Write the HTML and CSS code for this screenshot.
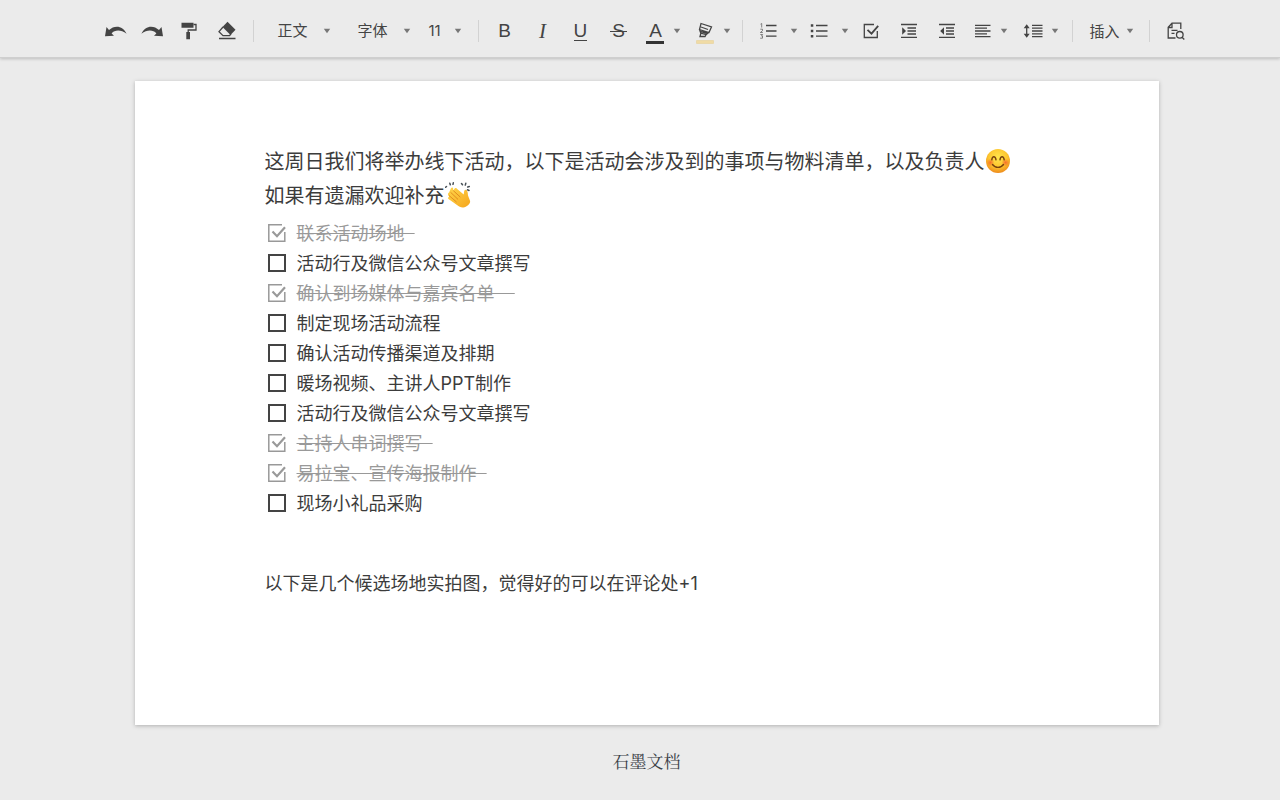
FILE: index.html
```html
<!DOCTYPE html>
<html lang="zh-CN">
<head>
<meta charset="utf-8">
<meta name="viewport" content="width=device-width, initial-scale=1">
<title>石墨文档</title>
<link rel="stylesheet" href="styles.css">
</head>
<body>
<svg class="defs" aria-hidden="true">
  <symbol id="caret" viewBox="0 0 8 6"><path d="M.8.8h6.4L4 5.2z" fill="#777"/></symbol>
  <symbol id="tick" viewBox="0 0 20 20"><path d="M15 1.8H1.8v16.4h16V9" fill="none" stroke="currentColor" stroke-width="1.5"/><path d="M5.5 8.5l4.5 4.7 8-9" fill="none" stroke="currentColor" stroke-width="2.2"/></symbol>
</svg>

<header class="toolbar" role="toolbar" aria-label="格式">
  <div class="group history">
    <button class="tool narrow" aria-label="撤销"><svg width="22" height="12" viewBox="0 0 22 12"><path class="solid" d="M1.5 2L0 11.2l9-.5-2.4-2.3C10 4.6 16 4.6 21.6 8.8 18 .4 9.500-.2 4 5z"/></svg></button>
    <button class="tool narrow" aria-label="重做"><svg width="22" height="12" viewBox="0 0 22 12"><path class="solid" transform="matrix(-1 0 0 1 22 0)" d="M1.5 2L0 11.2l9-.5-2.4-2.3C10 4.6 16 4.6 21.6 8.8 18 .4 9.500-.2 4 5z"/></svg></button>
    <button class="tool" aria-label="格式刷"><svg width="16" height="18" viewBox="0 0 16 18"><path class="solid" d="M.5.8h12v5H.5zM5.300 10H9v7.200H5.300z"/><path class="line" d="M12.500 2.500H15V8H7.200v2.500"/></svg></button>
    <button class="tool" aria-label="清除格式"><svg width="18" height="19" viewBox="0 0 18 19"><path class="solid" d="M9.500.8l8 8-5 5.200-8-8z"/><path class="line" d="M5 6L1 10.700l4 4h6.500L13 13M1 17.500h16.500"/></svg></button>
  </div>
  <div class="group selects">
    <label class="picker"><select aria-label="段落样式"><option>正文</option><option>标题</option></select><svg width="8" height="6"><use href="#caret"/></svg></label>
    <label class="picker"><select aria-label="字体"><option>字体</option></select><svg width="8" height="6"><use href="#caret"/></svg></label>
    <label class="picker size"><select aria-label="字号"><option>11</option><option>12</option></select><svg width="8" height="6"><use href="#caret"/></svg></label>
  </div>
  <div class="group marks">
    <button class="tool letter" aria-label="加粗">B</button>
    <button class="tool letter italic" aria-label="斜体">I</button>
    <button class="tool letter" aria-label="下划线"><span class="under">U</span></button>
    <button class="tool letter" aria-label="删除线"><span class="strike">S</span></button>
    <button class="tool letter drop" aria-label="文字颜色"><span class="ink">A</span><svg width="8" height="6"><use href="#caret"/></svg></button>
    <button class="tool drop" aria-label="背景颜色"><svg class="marker" width="18" height="22" viewBox="0 0 18 22"><path class="line" d="M5 1.500l10.500 3.500-2.500 5.500-9.500-3zM3.500 7.500l1.300 3.800 5.400 1.200 2.800-2.200M5 5l7 2.500M4 9.500l7 1.500M4.800 11.300L4 14.500h5l1.200-2"/><path d="M.5 18.500h17v3H.5z" fill="#f0dba5" stroke="#e5cc91" stroke-width=".5"/></svg><svg width="8" height="6"><use href="#caret"/></svg></button>
  </div>
  <div class="group blocks">
    <button class="tool drop wide" aria-label="有序列表"><svg width="18" height="16" viewBox="0 0 18 16"><path class="line" d="M7 2.500h10.500M7 8h10.500M7 13.200h10.500"/><path d="M1.500 1.200l1.200-.7v4M1.300 6.200h2.200v1.500L1.300 9.500h2.500M1.300 11.500h2.300L2.500 13h1v2.200H1.200" fill="none" stroke="#666" stroke-width=".8"/></svg><svg width="8" height="6"><use href="#caret"/></svg></button>
    <button class="tool drop wide" aria-label="无序列表"><svg width="18" height="16" viewBox="0 0 18 16"><path class="line" d="M6 2.500h11.500M6 8h11.500M6 13.200h11.500"/><path class="solid" d="M.8 1.300h2.500v2.500H.8zM.8 6.700h2.500v2.500H.8zM.8 12h2.500v2.500H.8z"/></svg><svg width="8" height="6"><use href="#caret"/></svg></button>
    <button class="tool" aria-label="任务列表"><svg width="16" height="16" viewBox="0 0 16 16"><path class="line" d="M11 1.500H1.300v13h13V8"/><path d="M4.500 6.800l4 3.800 6.700-7.800" fill="none" stroke="#444" stroke-width="1.800"/></svg></button>
    <button class="tool" aria-label="增加缩进"><svg width="18" height="16" viewBox="0 0 18 16"><path class="line" d="M1 1.500h16M1 14.300h16M7.500 5h8.500M7.500 8h8.500M7.500 11h8.500"/><path class="solid" d="M2.200 4.300v7.400L6 8z"/></svg></button>
    <button class="tool" aria-label="减少缩进"><svg width="18" height="16" viewBox="0 0 18 16"><path class="line" d="M1 1.500h16M1 14.300h16M8 5h8M8 8h8M8 11h8"/><path class="solid" d="M6 4.300v7.400L2.200 8z"/></svg></button>
    <button class="tool drop" aria-label="对齐"><svg width="18" height="16" viewBox="0 0 18 16"><path class="line" d="M1 2.300h15.500M1 5.200h12M1 8h15.500M1 10.800h12M1 13.600h15.500"/></svg><svg width="8" height="6"><use href="#caret"/></svg></button>
    <button class="tool drop" aria-label="行高"><svg width="20" height="16" viewBox="0 0 20 16"><path class="line" d="M9 2.300h10.500M9 5.200h10.500M9 8h10.500M9 10.800h10.500M9 13.600h10.500M3.700 3v10"/><path class="solid" d="M.7 5.200h6l-3-4zM.7 10.800h6l-3 4z"/></svg><svg width="8" height="6"><use href="#caret"/></svg></button>
  </div>
  <div class="group insert">
    <button class="tool menu">插入<svg width="8" height="6"><use href="#caret"/></svg></button>
  </div>
  <div class="group last">
    <button class="tool find" aria-label="查找"><svg width="18" height="18" viewBox="0 0 18 18"><path class="line" d="M8.500 16H1.200V5.300L5 1.200h8.800V7M5 1.500v4H1.500M4.500 8.300h6M4.500 11.300h3"/><circle class="line" cx="12.800" cy="12.800" r="3.300"/><path class="line" d="M15 15.200l2.300 2.300"/></svg></button>
  </div>
</header>

<div class="workspace">
<main class="page">
  <p class="intro">这周日我们将举办线下活动，以下是活动会涉及到的事项与物料清单，以及负责人<svg class="emoji" role="img" aria-label="微笑" viewBox="0 0 26 26"><defs><radialGradient id="face" cx=".5" cy=".35" r=".65"><stop offset="0" stop-color="#ffe64d"/><stop offset=".6" stop-color="#fdc62f"/><stop offset="1" stop-color="#ee8b1c"/></radialGradient><radialGradient id="blush"><stop offset="0" stop-color="#f4532b" stop-opacity=".75"/><stop offset="1" stop-color="#f4532b" stop-opacity="0"/></radialGradient></defs><circle cx="13" cy="13" r="12" fill="url(#face)"/><circle cx="5.500" cy="14.500" r="4" fill="url(#blush)"/><circle cx="20.500" cy="14.500" r="4" fill="url(#blush)"/><path d="M6.800 11.800c.5-4 3.600-4 4.200 0M15 11.800c.5-4 3.600-4 4.200 0M7.500 16.500c2.800 3.800 8.200 3.800 11 0" fill="none" stroke="#79420e" stroke-width="1.400" stroke-linecap="round"/></svg><br>如果有遗漏欢迎补充<svg class="emoji" role="img" aria-label="鼓掌" viewBox="0 0 26 26"><defs><linearGradient id="hand" x1="0" y1="0" x2="1" y2="1"><stop offset="0" stop-color="#ffd64b"/><stop offset="1" stop-color="#f5a51c"/></linearGradient></defs><path d="M4 10.500l2-4.300c.8-1.300 2.300-.7 2.200.8l-.2 1.800 1.700-2.300c.8-1 2-.4 2.500.5l6.500 5.500c.4-2 .1-4.500 1.800-4.800 2-.2 2.300 3 2.600 6l2 5.300c.4 3-3.600 6.200-6.800 6.500-2.300.2-4.300-.8-6.300-2.400L3.500 17c-1-1-.4-2.200.8-2l-1-1.600c-.7-1.200-.3-2.300.7-2.900z" fill="url(#hand)"/><path d="M5.800 10.500l7 6.700M4.300 13.800l7 6M8.500 8.800l6.500 6" fill="none" stroke="#dd861b" stroke-width=".9" stroke-linecap="round"/><path d="M1.500 4.500l-1 .8M4.800 1.200l.5 1.500M8.300.8L8 2.300M16.500 1.500l1 1.300M20.800 1.300l-.5 1.800M24.300 4.500l-1.600.5M22.500 7.800l1.500.7" fill="none" stroke="#495158" stroke-width="1.500" stroke-linecap="round"/></svg></p>

  <ul class="tasks">
    <li><label><input type="checkbox" checked><svg><use href="#tick"/></svg><span>联系活动场地&nbsp;&nbsp;</span></label></li>
    <li><label><input type="checkbox"><svg><use href="#tick"/></svg><span>活动行及微信公众号文章撰写</span></label></li>
    <li><label><input type="checkbox" checked><svg><use href="#tick"/></svg><span>确认到场媒体与嘉宾名单&nbsp;&nbsp;&nbsp;&nbsp;</span></label></li>
    <li><label><input type="checkbox"><svg><use href="#tick"/></svg><span>制定现场活动流程</span></label></li>
    <li><label><input type="checkbox"><svg><use href="#tick"/></svg><span>确认活动传播渠道及排期</span></label></li>
    <li><label><input type="checkbox"><svg><use href="#tick"/></svg><span>暖场视频、主讲人PPT制作</span></label></li>
    <li><label><input type="checkbox"><svg><use href="#tick"/></svg><span>活动行及微信公众号文章撰写</span></label></li>
    <li><label><input type="checkbox" checked><svg><use href="#tick"/></svg><span>主持人串词撰写&nbsp;&nbsp;</span></label></li>
    <li><label><input type="checkbox" checked><svg><use href="#tick"/></svg><span>易拉宝、宣传海报制作&nbsp;&nbsp;</span></label></li>
    <li><label><input type="checkbox"><svg><use href="#tick"/></svg><span>现场小礼品采购</span></label></li>
  </ul>

  <p class="note">以下是几个候选场地实拍图，觉得好的可以在评论处+1</p>
</main>

<footer class="brand">石墨文档</footer>
</div>
</body>
</html>
```

FILE: styles.css
```css
* {
  box-sizing: border-box;
}

body {
  margin: 0;
  background: #ebebeb;
  color: #3c3c3c;
  font-family: Inter, "Noto Sans CJK SC", sans-serif;
}

.defs {
  position: absolute;
  width: 0;
  height: 0;
}

.toolbar {
  display: flex;
  justify-content: center;
  align-items: center;
  min-height: 58px;
  padding: 4px 0 0 4px;
  border-bottom: 1px solid #cfcfcf;
  box-shadow: 0 1px 3px rgba(0, 0, 0, 0.2);
}

.group {
  display: flex;
  align-items: center;
  height: 22px;
  border-left: 1px solid #d2d2d2;
}

.history {
  border-left: 0;
  padding-right: 7px;
}

.selects {
  gap: 26px;
  padding: 0 16px 0 23px;
}

.marks {
  padding: 0 5px 0 6px;
}

.marks .drop {
  padding-left: 3px;
}

.blocks {
  padding: 0 6px 0 16px;
}

.insert {
  padding: 0 15px 0 16px;
}

.last {
  padding-left: 16px;
}

.tool {
  display: flex;
  justify-content: center;
  align-items: center;
  flex: none;
  width: 38px;
  height: 32px;
  padding: 0;
  border: 0;
  background: none;
  color: #444;
  font-family: inherit;
  font-size: 15px;
}

.narrow {
  width: 36px;
}

.drop {
  width: 50px;
  gap: 9px;
}

.drop.wide {
  width: auto;
  gap: 13px;
}

.wide + .wide {
  margin: 0 3px 0 12px;
}

.blocks .drop:not(.wide) {
  gap: 8px;
}

.menu {
  width: auto;
  gap: 6px;
}

.find {
  width: 20px;
}

.solid {
  fill: #444;
}

.line {
  fill: none;
  stroke: #444;
  stroke-width: 1.3px;
}

.letter {
  font-family: "Liberation Sans", sans-serif;
  font-size: 19px;
  line-height: 20px;
}

.letter.italic {
  font-family: "Liberation Serif", serif;
  font-size: 21px;
  font-style: italic;
}

.under {
  height: 20px;
  border-bottom: 1px solid #444;
}

.strike {
  position: relative;
}

.strike::after {
  content: "";
  position: absolute;
  left: -2px;
  right: -2px;
  top: 10px;
  height: 1px;
  background: #444;
}

.ink {
  width: 18px;
  height: 23px;
  margin-top: 3px;
  border-bottom: 3px solid #333;
}

.marker {
  margin-top: 4px;
}

.picker {
  display: grid;
  align-items: center;
  width: 54px;
}

.picker.size {
  width: 34px;
  margin-left: -9px;
}

.picker select,
.picker svg {
  grid-area: 1 / 1;
}

.picker svg {
  justify-self: end;
  pointer-events: none;
}

.picker select {
  appearance: none;
  width: 100%;
  padding: 0;
  border: 0;
  background: none;
  color: #444;
  font-family: inherit;
  font-size: 15px;
}

.workspace {
  padding: 23px 0 0 13px;
}

.page {
  width: 80vw;
  margin: 0 auto;
  padding: 64px 130px 124px;
  background: #fff;
  box-shadow: 0 1px 4px rgba(0, 0, 0, 0.25);
}

.intro,
.note {
  margin: 0;
  font-size: 20px;
  line-height: 34px;
}

.emoji {
  width: 26px;
  height: 26px;
  margin: -6px 0;
  vertical-align: 1px;
}

.tasks {
  margin: 6px 0 48px;
  padding: 0;
  list-style: none;
  font-size: 18px;
  line-height: 30px;
}

.tasks label {
  display: grid;
  grid-template-columns: 20px auto;
  justify-content: start;
  align-items: center;
  column-gap: 10px;
  padding-left: 2px;
}

.tasks input,
.tasks svg {
  grid-area: 1 / 1;
}

.tasks input {
  appearance: none;
  width: 18px;
  height: 18px;
  margin: 0 1px 2px;
  border: 2px solid #444;
}

.tasks svg {
  display: none;
  width: 20px;
  height: 20px;
  margin-bottom: 2px;
  color: #999;
  pointer-events: none;
}

.tasks input:checked {
  border-color: transparent;
}

.tasks input:checked ~ svg {
  display: block;
}

.tasks input:checked ~ span {
  color: #999;
  text-decoration: line-through;
}

.note {
  font-size: 18px;
}

.brand {
  padding: 24px 0;
  color: #3a4046;
  font-family: "Noto Serif CJK SC", "Noto Sans CJK SC", serif;
  font-size: 17px;
  line-height: 24px;
  text-align: center;
}
```
